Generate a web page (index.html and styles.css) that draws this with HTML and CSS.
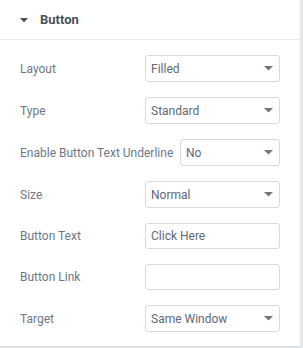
FILE: index.html
```html
<!DOCTYPE html>
<html lang="en">
<head>
    <meta charset="UTF-8">
    <meta name="viewport" content="width=device-width, initial-scale=1.0">
    <title>Button</title>
    <link rel="stylesheet" href="styles.css">
</head>
<body>
    <div class="panel">
        <div class="section-head">
            <svg class="caret" width="8" height="5" viewBox="0 0 8 5"><path d="M0 0h8L4 4.5z" fill="#495157"/></svg>
            <span>Button</span>
        </div>

        <div class="controls">
            <div class="control">
                <label>Layout</label>
                <div class="select-wrap">
                    <select><option>Filled</option></select>
                    <svg class="arrow" width="9" height="5" viewBox="0 0 9 5"><path d="M0 0h9L4.5 4.5z" fill="#6d7882"/></svg>
                </div>
            </div>
            <div class="control">
                <label>Type</label>
                <div class="select-wrap">
                    <select><option>Standard</option></select>
                    <svg class="arrow" width="9" height="5" viewBox="0 0 9 5"><path d="M0 0h9L4.5 4.5z" fill="#6d7882"/></svg>
                </div>
            </div>
            <div class="control">
                <label>Enable Button Text Underline</label>
                <div class="select-wrap small">
                    <select><option>No</option></select>
                    <svg class="arrow" width="9" height="5" viewBox="0 0 9 5"><path d="M0 0h9L4.5 4.5z" fill="#6d7882"/></svg>
                </div>
            </div>
            <div class="control">
                <label>Size</label>
                <div class="select-wrap">
                    <select><option>Normal</option></select>
                    <svg class="arrow" width="9" height="5" viewBox="0 0 9 5"><path d="M0 0h9L4.5 4.5z" fill="#6d7882"/></svg>
                </div>
            </div>
            <div class="control">
                <label>Button Text</label>
                <input type="text" value="Click Here">
            </div>
            <div class="control">
                <label>Button Link</label>
                <input type="text" value="">
            </div>
            <div class="control">
                <label>Target</label>
                <div class="select-wrap">
                    <select><option>Same Window</option></select>
                    <svg class="arrow" width="9" height="5" viewBox="0 0 9 5"><path d="M0 0h9L4.5 4.5z" fill="#6d7882"/></svg>
                </div>
            </div>
        </div>
    </div>
</body>
</html>
```

FILE: styles.css
```css
body {
    margin: 0;
    padding: 0;
    background-color: #e6e9ec;
    font-family: Roboto, Arial, sans-serif;
    font-size: 12px;
    width: 303px;
    height: 348px;
    overflow: hidden;
}
.panel {
    width: 300px;
    background: #fff;
    border-bottom: 1px solid #d5dadf;
}
.section-head {
    height: 39px;
    border-bottom: 1px solid #e6e9ec;
    display: flex;
    align-items: center;
    padding-left: 20px;
    color: #495157;
    font-size: 13px;
    font-weight: bold;
}
.section-head .caret {
    margin-right: 12px;
    margin-top: 1px;
}
.controls {
    padding: 15px 20px 14px 20px;
}
.control {
    display: flex;
    align-items: center;
    justify-content: space-between;
    margin-bottom: 15px;
}
.control:last-child {
    margin-bottom: 0;
}
.control label {
    color: #6d7882;
    white-space: nowrap;
}
.select-wrap {
    position: relative;
    width: 135px;
}
.select-wrap.small {
    width: 100px;
}
.select-wrap select,
.control input {
    appearance: none;
    -webkit-appearance: none;
    box-sizing: border-box;
    width: 100%;
    height: 27px;
    margin: 0;
    padding: 0 5px;
    border: 1px solid #d5dadf;
    border-radius: 3px;
    background: #fff;
    color: #5f6973;
    font-family: Roboto, Arial, sans-serif;
    font-size: 12px;
    outline: none;
}
.control input {
    width: 135px;
    height: 26px;
}
.select-wrap .arrow {
    position: absolute;
    right: 7px;
    top: 11px;
    pointer-events: none;
}
```
